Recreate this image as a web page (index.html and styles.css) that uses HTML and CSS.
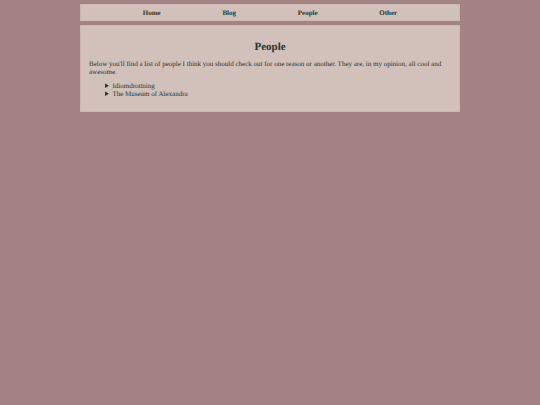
FILE: index.html
```html
<!DOCTYPE html>
<html lang="en">
  <head>
    <meta charset="utf-8" />
    <meta name="viewport" content="width=device-width, initial-scale=1" />
    <title>People</title>
    <link rel="stylesheet" href="styles.css">
  </head>
  <body>
    <nav class="box navbar">
      <a href="/">Home</a>
      <a href="/blog">Blog</a>
      <a href="/people">People</a>
      <a href="/other">Other</a>
    </nav>

    <main class="box content">
      <h1>People</h1>
      <p>Below you'll find a list of people I think you should check out for one reason or another. They are, in my opinion, all cool and awesome.</p>

      <div class="people">
        <details>
          <summary>Idiomdrottning</summary>
        </details>
        <details>
          <summary>The Museum of Alexandra</summary>
        </details>
      </div>
    </main>
  </body>
</html>
```

FILE: styles.css
```css
* {
  box-sizing: border-box;
}

body {
  max-width: 380px;
  margin: 4px auto;
  background-color: #a38383;
  color: #24382f;
  font-family: "Liberation Serif", "Times New Roman", serif;
  font-size: 7px;
  line-height: 8px;
  text-rendering: geometricPrecision;
}

.box {
  margin-bottom: 4px;
  border: 1px solid #cfb9b4;
  background-color: #d2c0ba;
}

.navbar {
  display: flex;
  justify-content: space-evenly;
  padding: 4px 0 3px;
}

.navbar a {
  color: inherit;
  font-weight: bold;
  text-decoration: none;
}

.content {
  padding: 15px 8px 13px;
}

h1 {
  margin: 0 0 7px;
  font-size: 11px;
  line-height: 12px;
  text-align: center;
}

p {
  margin: 0 0 6px;
}

.people {
  padding-left: 16px;
}
```
